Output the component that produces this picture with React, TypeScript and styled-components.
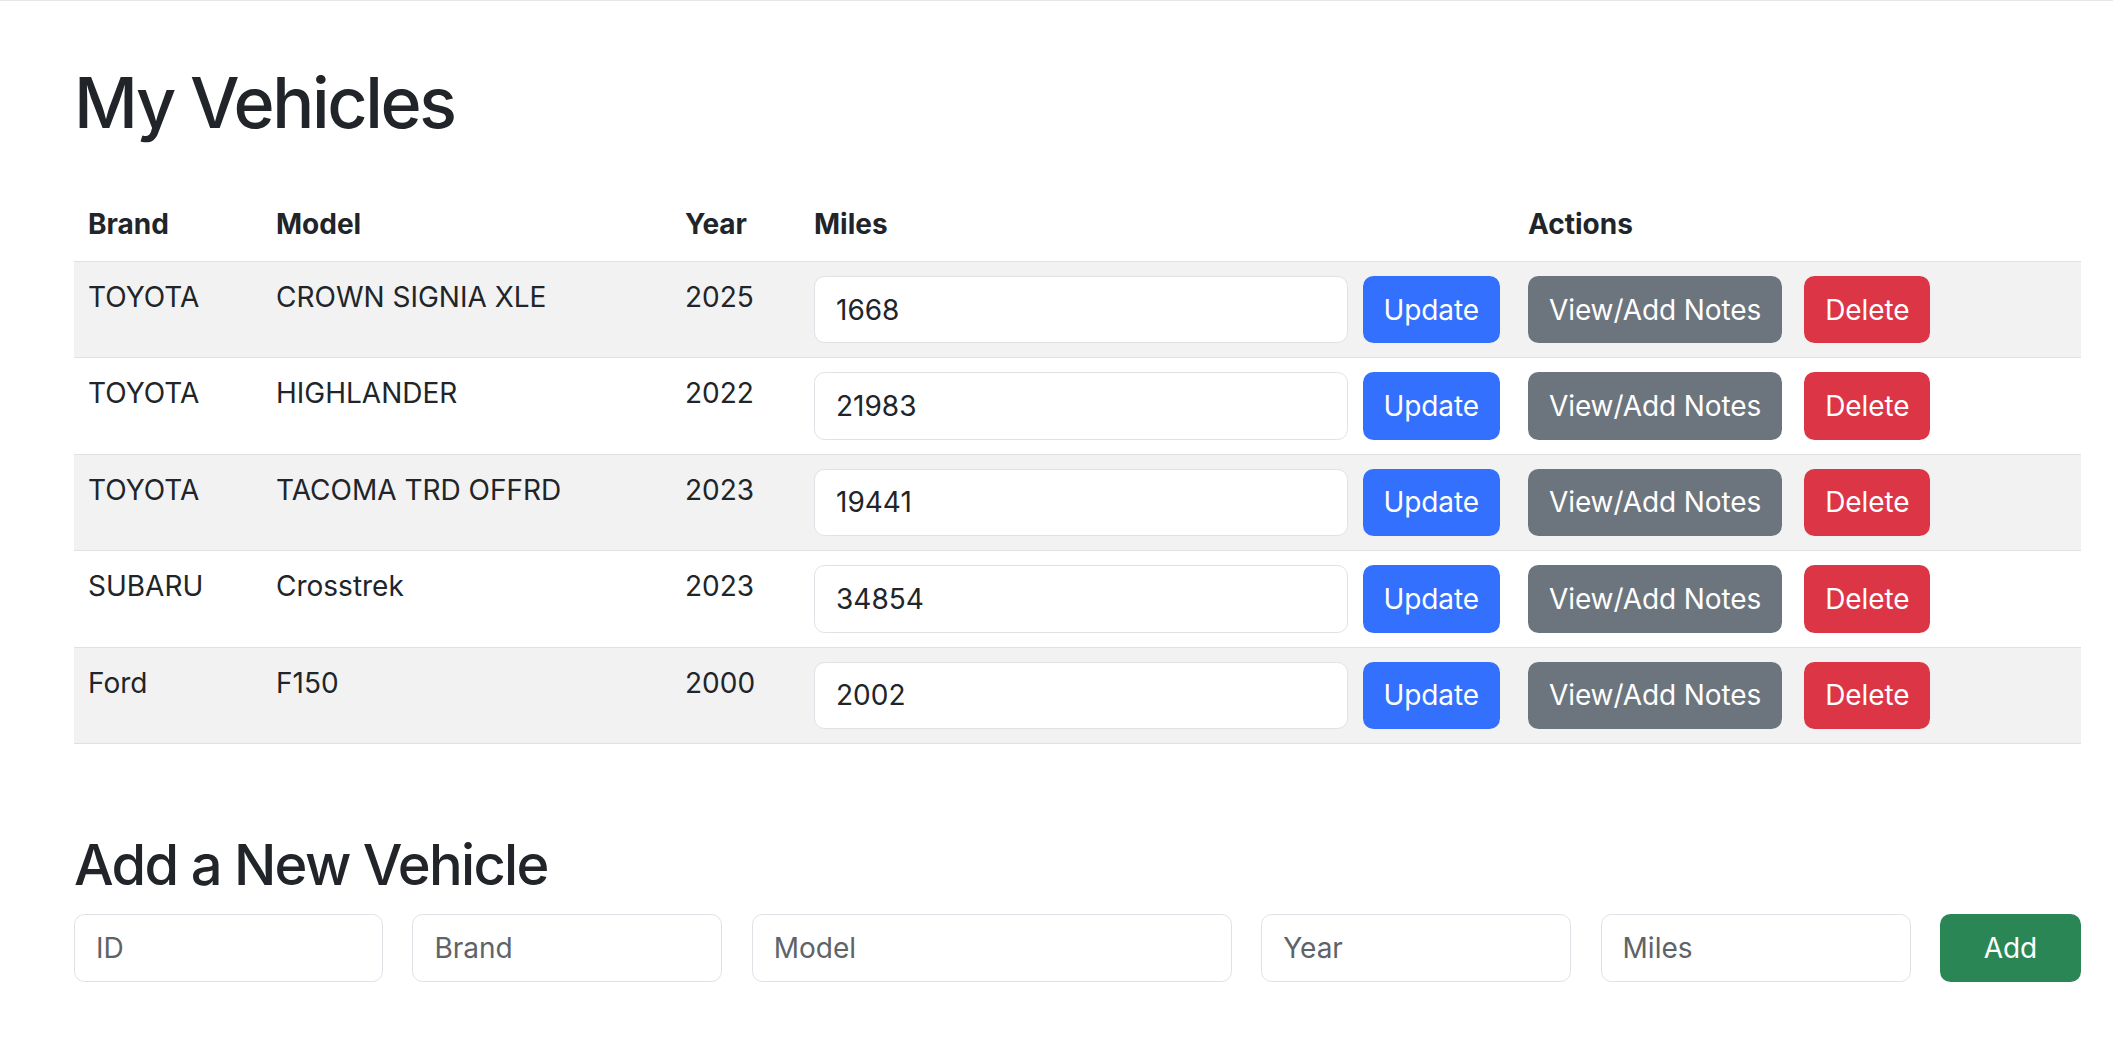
import React from 'react';
import styled, { createGlobalStyle } from 'styled-components';

const GlobalStyle = createGlobalStyle`
  *, *::before, *::after { box-sizing: border-box; }
  html, body { margin: 0; padding: 0; background: #ffffff; }
  body {
    font-family: Inter, "Noto Sans", "Liberation Sans", sans-serif;
    font-size: 28px;
    line-height: 1.5;
    color: #212529;
    border-top: 1px solid #e5e7ea;
  }
`;

const Page = styled.main`
  margin-left: 74px;
  width: 2007px;
  padding-top: 60px;
  padding-bottom: 40px;
`;

const Title = styled.h1`
  margin: 0 0 46px;
  font-size: 70px;
  font-weight: 500;
  line-height: 1.2;
  letter-spacing: -2.4px;
`;

const SubTitle = styled.h2`
  margin: 88px 0 15px;
  font-size: 56px;
  font-weight: 500;
  line-height: 1.2;
  letter-spacing: -1.7px;
`;

const Table = styled.table`
  width: 100%;
  border-collapse: collapse;
  table-layout: fixed;
  margin-bottom: 28px;
`;

const HeadCell = styled.th`
  text-align: left;
  font-weight: 700;
  padding: 12px 14px 16px;
  vertical-align: bottom;
  border-bottom: 1px solid #dee2e6;
`;

const Row = styled.tr<{ $striped: boolean }>`
  background: ${(p) => (p.$striped ? '#f2f2f2' : '#ffffff')};
`;

const Cell = styled.td`
  padding: 14px;
  vertical-align: top;
  border-bottom: 1px solid #dee2e6;
`;

const MilesGroup = styled.div`
  display: flex;
  gap: 15px;
`;

const ActionGroup = styled.div`
  display: flex;
  gap: 22px;
`;

const TextInput = styled.input`
  display: block;
  width: 100%;
  min-width: 0;
  flex: 1;
  height: 67.4px;
  padding: 0 21px;
  font-family: inherit;
  font-size: 28px;
  color: #212529;
  background: #ffffff;
  border: 1px solid #dee2e6;
  border-radius: 10.5px;
  outline: none;
  &::placeholder { color: #5e6368; }
`;

const COLORS: Record<string, string> = {
  primary: '#3370fe',
  secondary: '#6c757d',
  danger: '#dc3545',
  success: '#2a8755',
};

const Button = styled.button<{ $variant: string }>`
  flex: none;
  height: 67.4px;
  padding: 0 21px;
  font-family: inherit;
  font-size: 28px;
  font-weight: 400;
  line-height: 1.5;
  letter-spacing: -0.1px;
  color: #ffffff;
  background: ${(p) => COLORS[p.$variant]};
  border: none;
  border-radius: 10.5px;
  white-space: nowrap;
  cursor: pointer;
`;

const AddForm = styled.form`
  display: grid;
  grid-template-columns: 309px 310px 480px 310px 310px 1fr;
  column-gap: 29.4px;
`;

const vehicles = [
  { brand: 'TOYOTA', model: 'CROWN SIGNIA XLE', year: 2025, miles: 1668 },
  { brand: 'TOYOTA', model: 'HIGHLANDER', year: 2022, miles: 21983 },
  { brand: 'TOYOTA', model: 'TACOMA TRD OFFRD', year: 2023, miles: 19441 },
  { brand: 'SUBARU', model: 'Crosstrek', year: 2023, miles: 34854 },
  { brand: 'Ford', model: 'F150', year: 2000, miles: 2002 },
];

export default function App() {
  return (
    <>
      <GlobalStyle />
      <Page>
        <Title>My Vehicles</Title>
        <Table>
          <colgroup>
            <col style={{ width: 188 }} />
            <col style={{ width: 409 }} />
            <col style={{ width: 129 }} />
            <col style={{ width: 714 }} />
            <col />
          </colgroup>
          <thead>
            <tr>
              <HeadCell>Brand</HeadCell>
              <HeadCell>Model</HeadCell>
              <HeadCell>Year</HeadCell>
              <HeadCell>Miles</HeadCell>
              <HeadCell>Actions</HeadCell>
            </tr>
          </thead>
          <tbody>
            {vehicles.map((v, i) => (
              <Row key={i} $striped={i % 2 === 0}>
                <Cell>{v.brand}</Cell>
                <Cell>{v.model}</Cell>
                <Cell>{v.year}</Cell>
                <Cell>
                  <MilesGroup>
                    <TextInput type="text" defaultValue={String(v.miles)} />
                    <Button $variant="primary">Update</Button>
                  </MilesGroup>
                </Cell>
                <Cell>
                  <ActionGroup>
                    <Button $variant="secondary">View/Add Notes</Button>
                    <Button $variant="danger">Delete</Button>
                  </ActionGroup>
                </Cell>
              </Row>
            ))}
          </tbody>
        </Table>
        <SubTitle>Add a New Vehicle</SubTitle>
        <AddForm onSubmit={(e) => e.preventDefault()}>
          <TextInput placeholder="ID" />
          <TextInput placeholder="Brand" />
          <TextInput placeholder="Model" />
          <TextInput placeholder="Year" />
          <TextInput placeholder="Miles" />
          <Button $variant="success" type="submit">Add</Button>
        </AddForm>
      </Page>
    </>
  );
}
